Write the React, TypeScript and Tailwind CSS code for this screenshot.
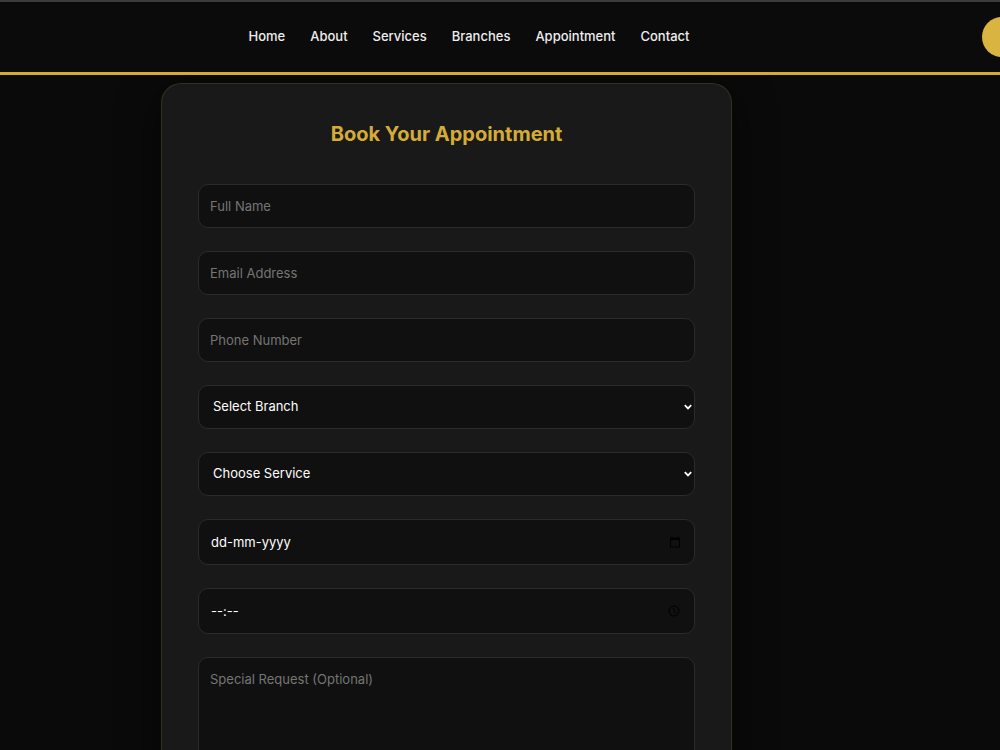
import { useState, FormEvent } from 'react'

const navLinks = ['Home', 'About', 'Services', 'Branches', 'Appointment', 'Contact']
const branches = ['Downtown', 'Uptown', 'Riverside']
const services = ['Haircut', 'Beard Trim', 'Facial']

const fieldClass =
  'block w-full h-11 rounded-[10px] border border-[#2b2b2b] bg-[#101010] px-[11px] text-[13px] text-white placeholder:text-[#757575] outline-none focus:border-[#d4af37]'
const selectClass =
  'block w-full h-11 appearance-none rounded-[10px] border border-[#2b2b2b] bg-[#101010] px-[14px] text-[13px] text-white outline-none focus:border-[#d4af37]'
const pickerClass =
  'block w-full h-[46px] rounded-[10px] border border-[#2b2b2b] bg-[#101010] px-3 text-[13px] text-white placeholder:text-white outline-none focus:border-[#d4af37]'

function CalendarIcon() {
  return (
    <svg viewBox='0 0 24 24' className='w-3 h-3' fill='currentColor'>
      <path d='M20 3h-1V1h-2v2H7V1H5v2H4c-1.1 0-2 .9-2 2v16c0 1.1.9 2 2 2h16c1.1 0 2-.9 2-2V5c0-1.1-.9-2-2-2zm0 18H4V8h16v13z' />
    </svg>
  )
}

function ClockIcon() {
  return (
    <svg viewBox='0 0 24 24' className='w-3 h-3' fill='none' stroke='currentColor' strokeWidth='2'>
      <circle cx='12' cy='12' r='10' />
      <path d='M12 6v7l4.5 3' />
    </svg>
  )
}

function SelectArrow() {
  return (
    <svg
      viewBox='0 0 8 6'
      className='pointer-events-none absolute inset-y-0 right-[3px] my-auto w-2 h-1.5'
      fill='none'
      stroke='white'
      strokeWidth='1.8'
    >
      <path d='M.8 1.2 4 4.4l3.2-3.2' />
    </svg>
  )
}

export default function App() {
  const [branch, setBranch] = useState('')
  const [service, setService] = useState('')

  const handleSubmit = (e: FormEvent) => {
    e.preventDefault()
  }

  return (
    <div className="h-screen overflow-x-hidden overflow-y-auto [scrollbar-width:none] bg-[#0a0a0a] font-['Inter','Open_Sans',sans-serif] text-white">
      {/* Header */}
      <header className='sticky top-0 z-10 flex h-[75px] items-center overflow-hidden border-t-2 border-b-3 border-t-[#3b3b3b] border-b-[#d4ac32] bg-[#0b0b0b]'>
        <nav className='flex flex-1 justify-center gap-[25px] pr-11 text-[13px] font-medium text-[#eeeeee]'>
          {navLinks.map((link) => (
            <a key={link} href={`#${link.toLowerCase()}`} className='hover:text-[#d4af37]'>
              {link}
            </a>
          ))}
        </nav>
        <button
          type='button'
          aria-label='Book Now'
          className='-mr-[102px] h-10 w-[120px] shrink-0 rounded-full bg-[#d9b441]'
        />
      </header>

      {/* Booking form */}
      <main className='flex justify-center pt-2 pr-[107px] pb-10'>
        <form
          onSubmit={handleSubmit}
          className='w-full max-w-[571px] rounded-[20px] border border-[#d4af37]/15 bg-[#191919] p-9 shadow-[0_10px_40px_rgba(0,0,0,0.6)]'
        >
          <h2 className='mb-9 text-center text-[20px] leading-7 font-bold text-[#d4ac36]'>
            Book Your Appointment
          </h2>

          <div className='flex flex-col gap-[23px]'>
            <input type='text' aria-label='Full Name' placeholder='Full Name' className={fieldClass} />
            <input type='email' aria-label='Email Address' placeholder='Email Address' className={fieldClass} />
            <input type='tel' aria-label='Phone Number' placeholder='Phone Number' className={fieldClass} />

            <div className='relative'>
              <select
                aria-label='Select Branch'
                value={branch}
                onChange={(e) => setBranch(e.target.value)}
                className={selectClass}
              >
                <option value=''>Select Branch</option>
                {branches.map((b) => (
                  <option key={b}>{b}</option>
                ))}
              </select>
              <SelectArrow />
            </div>

            <div className='relative'>
              <select
                aria-label='Choose Service'
                value={service}
                onChange={(e) => setService(e.target.value)}
                className={selectClass}
              >
                <option value=''>Choose Service</option>
                {services.map((s) => (
                  <option key={s}>{s}</option>
                ))}
              </select>
              <SelectArrow />
            </div>

            <div className='relative'>
              <input type='text' aria-label='Date' placeholder='dd-mm-yyyy' className={pickerClass} />
              <span className='pointer-events-none absolute inset-y-0 right-[14px] flex items-center text-black'>
                <CalendarIcon />
              </span>
            </div>

            <div className='relative'>
              <input type='text' aria-label='Time' placeholder='--:--' className={pickerClass} />
              <span className='pointer-events-none absolute inset-y-0 right-[15px] flex items-center text-black'>
                <ClockIcon />
              </span>
            </div>

            <textarea
              aria-label='Special Request'
              placeholder='Special Request (Optional)'
              rows={5}
              className='block w-full resize-none rounded-[10px] border border-[#2b2b2b] bg-[#101010] px-[11px] py-[11px] text-[13px] leading-5 text-white placeholder:text-[#757575] outline-none focus:border-[#d4af37]'
            />
          </div>
        </form>
      </main>
    </div>
  )
}
